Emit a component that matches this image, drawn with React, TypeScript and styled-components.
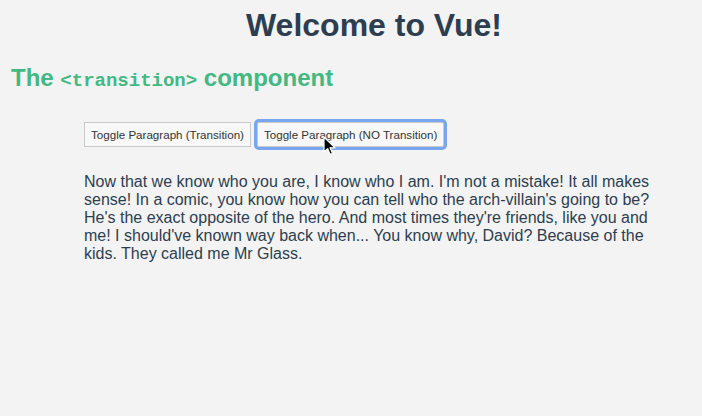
import React from 'react';
import styled, { createGlobalStyle } from 'styled-components';

const GlobalStyle = createGlobalStyle`
  html, body {
    margin: 0;
    padding: 0;
    background: #f3f3f3;
  }
  body {
    font-family: 'Liberation Sans', Arial, sans-serif;
    color: #2c3e50;
  }
`;

const App: React.FC = () => {
  return (
    <>
      <GlobalStyle />
      <Page>
        <Title>Welcome to Vue!</Title>
        <Subtitle>
          The <Code>&lt;transition&gt;</Code> component
        </Subtitle>
        <Demo>
          <ButtonRow>
            <ToggleButton>Toggle Paragraph (Transition)</ToggleButton>
            <ToggleButton $focused>
              Toggle Paragraph (NO Transition)
              <Cursor width="13" height="20" viewBox="0 0 13 20">
                <path
                  d="M1 1 L1 16 L4.6 12.6 L7.2 18.4 L9.6 17.4 L7 11.8 L12 11.8 Z"
                  fill="#000"
                  stroke="#fff"
                  strokeWidth="1.2"
                  strokeLinejoin="round"
                />
              </Cursor>
            </ToggleButton>
          </ButtonRow>
          <Paragraph>
            Now that we know who you are, I know who I am. I'm not a mistake! It all makes
            sense! In a comic, you know how you can tell who the arch-villain's going to be?
            He's the exact opposite of the hero. And most times they're friends, like you and
            me! I should've known way back when... You know why, David? Because of the
            kids. They called me Mr Glass.
          </Paragraph>
        </Demo>
      </Page>
    </>
  );
};

export default App;

const Page = styled.div`
  padding-top: 7px;
  min-height: 409px;
`;

const Title = styled.h1`
  margin: 0;
  padding-left: 46px;
  text-align: center;
  font-size: 32px;
  line-height: 37px;
  font-weight: bold;
  color: #2c3e50;
`;

const Subtitle = styled.h2`
  margin: 20px 0 0 11px;
  font-size: 24px;
  line-height: 28px;
  font-weight: bold;
  color: #42b983;
`;

const Code = styled.code`
  font-family: 'Liberation Mono', 'Courier New', monospace;
  font-size: 19px;
  font-weight: bold;
`;

const Demo = styled.section`
  padding-left: 84px;
  margin-top: 27px;
`;

const ButtonRow = styled.div`
  display: flex;
  gap: 4px;
  align-items: center;
`;

const ToggleButton = styled.button<{ $focused?: boolean }>`
  position: relative;
  height: 25px;
  padding: 0 6px;
  font-family: 'Liberation Sans', Arial, sans-serif;
  font-size: 11.6px;
  color: #333;
  background: #f8f8f8;
  border: 1px solid #c9c9c9;
  border-radius: ${(p) => (p.$focused ? '2px' : '0')};
  box-shadow: ${(p) => (p.$focused ? '0 0 0 3px #78a6f0' : 'none')};
  margin-left: ${(p) => (p.$focused ? '2px' : '0')};
`;

const Cursor = styled.svg`
  position: absolute;
  left: 65px;
  top: 13px;
  pointer-events: none;
`;

const Paragraph = styled.p`
  width: 572px;
  margin: 26px 0 0;
  font-size: 16px;
  line-height: 18px;
  color: #2c3e50;
`;
